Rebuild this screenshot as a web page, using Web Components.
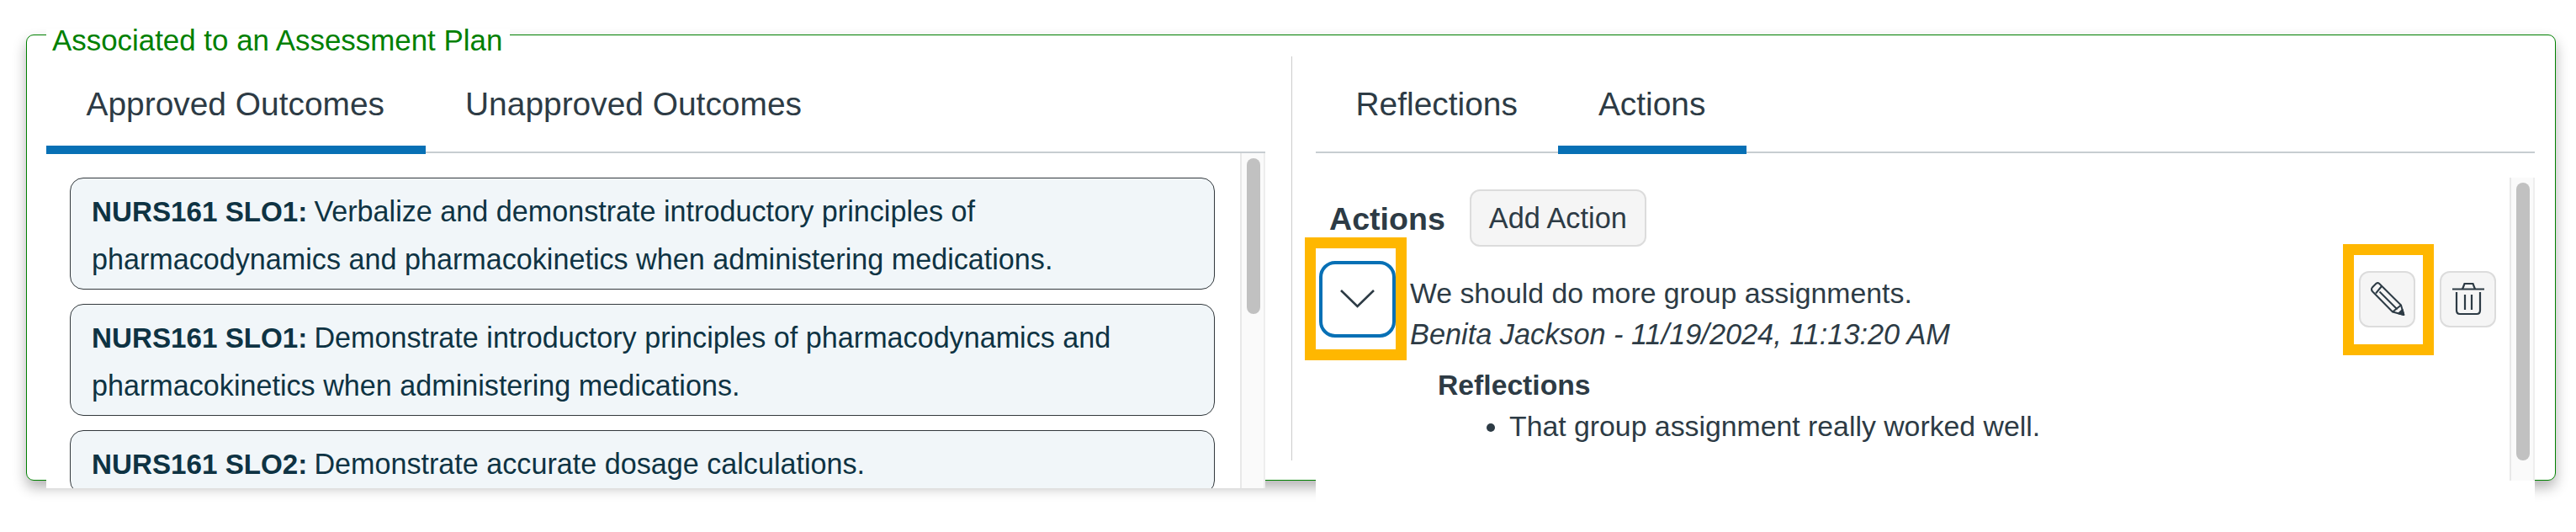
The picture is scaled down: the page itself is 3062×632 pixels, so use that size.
<!DOCTYPE html>
<html lang="en">
<head>
<meta charset="utf-8">
<title>Associated to an Assessment Plan</title>
<style>
  html, body { margin: 0; height: 100%; overflow: hidden; background: #fff; }
  body { font-family: "Liberation Sans", Arial, sans-serif; font-size: 33.8px; color: #2d3b45; }
</style>
</head>
<body>
<page-edge></page-edge>
<plan-box legend="Associated to an Assessment Plan">
  <div slot="left">
    <tab-bar>
      <tab-item active>Approved Outcomes</tab-item>
      <tab-item>Unapproved Outcomes</tab-item>
    </tab-bar>
    <scroll-pane inset="28" top="29" end="30" rail-top="0" thumb-top="6" thumb-height="185" height="398">
      <outcome-card><b>NURS161 SLO1:</b> <span>Verbalize and demonstrate introductory principles of</span> <span>pharmacodynamics and pharmacokinetics when administering medications.</span></outcome-card>
      <outcome-card><b>NURS161 SLO1:</b> <span>Demonstrate introductory principles of pharmacodynamics and</span> <span>pharmacokinetics when administering medications.</span></outcome-card>
      <outcome-card><b>NURS161 SLO2:</b> <span>Demonstrate accurate dosage calculations.</span></outcome-card>
    </scroll-pane>
  </div>
  <div slot="right">
    <tab-bar>
      <tab-item>Reflections</tab-item>
      <tab-item active>Actions</tab-item>
    </tab-bar>
    <scroll-pane inset="0" top="43" end="16" rail-top="29" thumb-top="6" thumb-height="330" height="389">
      <actions-head></actions-head>
      <action-row>
        <span>We should do more group assignments.</span>
        <i slot="meta">Benita Jackson - 11/19/2024, 11:13:20 AM</i>
        <span slot="reflection">That group assignment really worked well.</span>
      </action-row>
    </scroll-pane>
  </div>
</plan-box>

<script>
class PageEdge extends HTMLElement {
  constructor() {
    super();
    this.attachShadow({ mode: 'open' });
  }

  connectedCallback() {
    this.shadowRoot.innerHTML = `
      <style>
        :host {
          display: block;
          height: 0;
          margin: 0 0 0 40px;
          box-shadow: 0 0 7px rgba(0, 0, 0, .14);
        }
      </style>
    `;
  }
}

class PlanBox extends HTMLElement {
  constructor() {
    super();
    this.attachShadow({ mode: 'open' });
  }

  connectedCallback() {
    this.shadowRoot.innerHTML = `
      <style>
        :host {
          display: block;
          box-sizing: border-box;
          width: 3007px;
          height: 530px;
          margin: 41px 0 0 31px;
          border: 1px solid #008000;
          border-radius: 9px;
          box-shadow: 0 8px 16px rgba(0, 0, 0, .3);
        }
        .legend {
          width: fit-content;
          height: 28px;
          margin: -8px 0 0 23px;
          padding: 0 9px 0 7px;
          background: #fff;
          color: #008000;
          font-size: 34.9px;
          line-height: 28px;
          white-space: nowrap;
        }
        .cols {
          display: flex;
          margin: 5px 0 0 23px;
        }
        .left, .right {
          width: 1449px;
          flex: none;
          background: #fff;
        }
        .left { height: 513px; overflow: hidden; }
        .right { height: 566px; }
        .divider {
          width: 1px;
          height: 480px;
          flex: none;
          margin: 0 28px 0 31px;
          background: #ccc;
        }
      </style>
      <div class="legend">${this.getAttribute('legend')}</div>
      <div class="cols">
        <div class="left"><slot name="left"></slot></div>
        <div class="divider"></div>
        <div class="right"><slot name="right"></slot></div>
      </div>
    `;
  }
}

class TabBar extends HTMLElement {
  constructor() {
    super();
    this.attachShadow({ mode: 'open' });
  }

  connectedCallback() {
    this.shadowRoot.innerHTML = `
      <style>
        :host {
          display: flex;
          box-sizing: border-box;
          height: 115px;
          border-bottom: 2px solid #c7cdd1;
        }
      </style>
      <slot></slot>
    `;
  }
}

class TabItem extends HTMLElement {
  constructor() {
    super();
    this.attachShadow({ mode: 'open' });
  }

  connectedCallback() {
    this.shadowRoot.innerHTML = `
      <style>
        :host {
          display: block;
          box-sizing: border-box;
          height: 116px;
          padding: 33px 48.5px 0 47.5px;
          font-size: 38.9px;
          line-height: 48px;
          white-space: nowrap;
          color: #2d3b45;
        }
        :host([active]) {
          border-bottom: 10px solid #0770b5;
        }
      </style>
      <slot></slot>
    `;
  }
}

class ScrollPane extends HTMLElement {
  constructor() {
    super();
    this.attachShadow({ mode: 'open' });
  }

  connectedCallback() {
    const a = (n) => this.getAttribute(n);
    this.shadowRoot.innerHTML = `
      <style>
        :host {
          display: flex;
          height: ${a('height')}px;
        }
        .body {
          flex: 1;
          min-width: 0;
          padding: ${a('top')}px ${a('end')}px 0 ${a('inset')}px;
        }
        .rail {
          box-sizing: border-box;
          width: 30px;
          flex: none;
          margin-top: ${a('rail-top')}px;
          padding: ${a('thumb-top')}px 4px 0 6px;
          background: #fafafa;
          border-left: 2px solid #e8e8e8;
          border-right: 2px solid #eee;
        }
        .thumb {
          height: ${a('thumb-height')}px;
          border-radius: 8px;
          background: #c1c1c1;
        }
      </style>
      <div class="body"><slot></slot></div>
      <div class="rail"><div class="thumb"></div></div>
    `;
  }
}

class OutcomeCard extends HTMLElement {
  constructor() {
    super();
    this.attachShadow({ mode: 'open' });
  }

  connectedCallback() {
    this.shadowRoot.innerHTML = `
      <style>
        :host {
          display: block;
          box-sizing: border-box;
          margin-bottom: 17px;
          padding: 11px 25px 6px;
          border: 1px solid #33393d;
          border-radius: 16px;
          background: #f1f6f9;
          color: #0e3343;
          font-size: 34.15px;
          line-height: 57px;
        }
        ::slotted(b) {
          font-size: 33.2px;
          margin-right: -1.5px;
        }
      </style>
      <slot></slot>
    `;
  }
}

class IconButton extends HTMLElement {
  constructor() {
    super();
    this.attachShadow({ mode: 'open' });
  }

  connectedCallback() {
    this.shadowRoot.innerHTML = `
      <style>
        :host {
          display: block;
          position: relative;
          box-sizing: border-box;
          width: 67px;
          height: 67px;
          flex: none;
          border: 2.5px solid #dcdcdc;
          border-radius: 12px;
          background: #f5f5f5;
        }
        ::slotted(svg) {
          display: block;
          position: absolute;
          left: -2.5px;
          top: -2.5px;
        }
      </style>
      <slot></slot>
    `;
  }
}

// orange call-out frame laid over a control in the screenshot
class CallOut extends HTMLElement {
  constructor() {
    super();
    this.attachShadow({ mode: 'open' });
  }

  connectedCallback() {
    this.shadowRoot.innerHTML = `
      <style>
        :host {
          display: block;
          position: absolute;
          top: ${this.getAttribute('t')}px;
          left: ${this.getAttribute('l')}px;
          right: ${this.getAttribute('r')}px;
          bottom: ${this.getAttribute('b')}px;
          border: 13px solid #ffb700;
          pointer-events: none;
        }
      </style>
    `;
  }
}

class ActionsHead extends HTMLElement {
  constructor() {
    super();
    this.attachShadow({ mode: 'open' });
  }

  connectedCallback() {
    this.shadowRoot.innerHTML = `
      <style>
        :host {
          display: flex;
          align-items: center;
          height: 68px;
          padding-left: 16px;
        }
        h2 {
          margin: 2px 29px 0 0;
          font-size: 37.6px;
          font-weight: bold;
          line-height: 48px;
        }
        button {
          box-sizing: border-box;
          width: 210px;
          height: 68px;
          padding: 0;
          border: 2.5px solid #dcdcdc;
          border-radius: 12px;
          background: #f5f5f5;
          color: #2d3b45;
          font: 34.3px "Liberation Sans", Arial, sans-serif;
        }
      </style>
      <h2>Actions</h2>
      <button type="button">Add Action</button>
    `;
  }
}

class ActionRow extends HTMLElement {
  constructor() {
    super();
    this.attachShadow({ mode: 'open' });
  }

  connectedCallback() {
    this.shadowRoot.innerHTML = `
      <style>
        :host {
          display: block;
          padding: 17px 0 0 4px;
          line-height: 49px;
        }
        .row { display: flex; align-items: flex-start; }
        .toggle {
          position: relative;
          box-sizing: border-box;
          width: 91px;
          height: 91px;
          flex: none;
          border: 4px solid #0770b5;
          border-radius: 19px;
          background: #fff;
        }
        .toggle svg {
          display: block;
          position: absolute;
          left: -4px;
          top: -4px;
        }
        .text {
          flex: 1;
          margin: 14px 0 0 17px;
        }
        .meta { display: block; font-size: 34.3px; }
        .tools {
          display: flex;
          align-items: flex-start;
          gap: 29px;
          margin-top: 12px;
        }
        .edit { position: relative; height: 67px; }
        .refl { margin: 11px 0 0 141px; }
        .refl b { display: block; font-size: 33.7px; }
        ul { margin: 0; padding: 0 0 0 85px; }
      </style>
      <div class="row">
        <div class="toggle">
          <svg width="91" height="91" viewBox="0 0 91 91" fill="none" stroke="#2d3b45" stroke-width="2.6">
            <path d="M26 35 L45.5 54 L65 35"/>
          </svg>
          <call-out t="-32" l="-21" r="-17" b="-31"></call-out>
        </div>
        <div class="text">
          <slot></slot>
          <span class="meta"><slot name="meta"></slot></span>
        </div>
        <div class="tools">
          <div class="edit">
            <icon-button>
              <svg width="67" height="67" viewBox="0 0 67 67" fill="none" stroke="#2d3b45" stroke-width="2" stroke-linejoin="round">
                <path d="M15.8 19.5 L20.5 14.8 Q22.3 13.4 24 14.8 L50 40.5 L53.3 52 L40 48.5 L15.8 24 Q14.2 21.5 15.8 19.5 Z"/>
                <path d="M27 18 L20 26.5"/>
                <path d="M24.5 24.5 L45.5 45.5"/>
                <path d="M50 40.5 L40 48.5"/>
                <path d="M53.3 52 L47 50.4 L51.7 46 Z" fill="#2d3b45"/>
              </svg>
            </icon-button>
            <call-out t="-32" l="-19" r="-22" b="-33"></call-out>
          </div>
          <icon-button>
            <svg width="67" height="67" viewBox="0 0 67 67" fill="none" stroke="#2d3b45" stroke-width="2.2">
              <path d="M15 21.5 H53"/>
              <path d="M27 21.5 L29.5 15 H39.5 L42 21.5"/>
              <path d="M20 25 V46.5 Q20 51 24 51 H44 Q48 51 48 46.5 V25"/>
              <path d="M30 28 V46 M38 28 V46"/>
            </svg>
          </icon-button>
        </div>
      </div>
      <div class="refl">
        <b>Reflections</b>
        <ul><li><slot name="reflection"></slot></li></ul>
      </div>
    `;
  }
}

customElements.define('page-edge', PageEdge);
customElements.define('plan-box', PlanBox);
customElements.define('tab-bar', TabBar);
customElements.define('tab-item', TabItem);
customElements.define('scroll-pane', ScrollPane);
customElements.define('outcome-card', OutcomeCard);
customElements.define('icon-button', IconButton);
customElements.define('call-out', CallOut);
customElements.define('actions-head', ActionsHead);
customElements.define('action-row', ActionRow);
</script>
</body>
</html>
